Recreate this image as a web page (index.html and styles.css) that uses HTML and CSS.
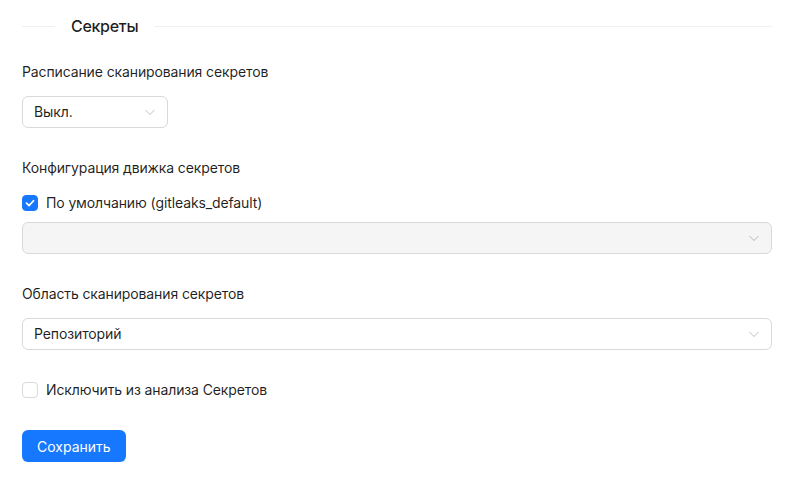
FILE: index.html
```html
<!DOCTYPE html>
<html>
<head>
<title>Секреты</title>
<meta name="viewport" content="width=device-width, initial-scale=1">
<link rel="stylesheet" href="styles.css">
</head>
<body>
<div class="page">
  <div class="divider"><span class="divider-title">Секреты</span></div>

  <form class="form">
    <div class="form-item">
      <label class="form-label">Расписание сканирования секретов</label>
      <div class="select select-small">
        <span class="select-value">Выкл.</span>
        <svg class="select-arrow" viewBox="0 0 12 12"><path d="M1.5 4 L6 8.5 L10.5 4" /></svg>
      </div>
    </div>

    <div class="form-item">
      <label class="form-label">Конфигурация движка секретов</label>
      <label class="checkbox">
        <span class="checkbox-box checked">
          <svg viewBox="0 0 16 16"><path d="M4 8.2 L6.9 11 L12 5.4" /></svg>
        </span>
        <span>По умолчанию (gitleaks_default)</span>
      </label>
      <div class="select select-disabled">
        <span class="select-value"></span>
        <svg class="select-arrow" viewBox="0 0 12 12"><path d="M1.5 4 L6 8.5 L10.5 4" /></svg>
      </div>
    </div>

    <div class="form-item">
      <label class="form-label">Область сканирования секретов</label>
      <div class="select">
        <span class="select-value">Репозиторий</span>
        <svg class="select-arrow" viewBox="0 0 12 12"><path d="M1.5 4 L6 8.5 L10.5 4" /></svg>
      </div>
    </div>

    <div class="form-item">
      <label class="checkbox">
        <span class="checkbox-box"></span>
        <span>Исключить из анализа Секретов</span>
      </label>
    </div>

    <button type="button" class="btn-primary">Сохранить</button>
  </form>
</div>
</body>
</html>
```

FILE: styles.css
```css
body { margin: 0; background-color: #fff; font-family: Inter, "Liberation Sans", sans-serif; font-size: 14px; line-height: 22px; letter-spacing: -0.12px; color: rgba(0,0,0,0.88); }
.page { padding: 15px 21px 0 22px; }

.divider { display: flex; align-items: center; height: 22px; }
.divider::before, .divider::after { content: ''; border-top: 1px solid rgba(5,5,5,0.06); }
.divider::before { flex: 0 0 33px; }
.divider::after { flex: 1; }
.divider-title { padding: 0 16px; font-size: 16px; font-weight: 500; line-height: 22px; letter-spacing: -0.3px; }

.form { margin-top: 24px; }
.form-item { margin-bottom: 29px; }
.form-label { display: block; line-height: 22px; margin-bottom: 13px; }

.select { display: flex; align-items: center; justify-content: space-between; height: 32px; box-sizing: border-box; padding: 0 11px; border: 1px solid #d9d9d9; border-radius: 6px; background-color: #fff; }
.select-small { width: 146px; }
.select-disabled { background-color: #f5f5f5; margin-top: 8px; }
.select-arrow { width: 12px; height: 12px; fill: none; stroke: rgba(0,0,0,0.25); stroke-width: 1; }

.checkbox { display: flex; align-items: center; gap: 8px; line-height: 22px; }
.checkbox-box { width: 16px; height: 16px; box-sizing: border-box; border: 1px solid #d9d9d9; border-radius: 4px; background-color: #fff; display: flex; }
.checkbox-box.checked { background-color: #1677ff; border-color: #1677ff; }
.checkbox-box svg { width: 14px; height: 14px; fill: none; stroke: #fff; stroke-width: 2; stroke-linecap: round; stroke-linejoin: round; }

.btn-primary { height: 32px; padding: 0 15px; border: none; border-radius: 6px; background-color: #1677ff; color: #fff; font-family: inherit; font-size: 14px; letter-spacing: 0; box-shadow: 0 2px 0 rgba(5,145,255,0.1); }
```
